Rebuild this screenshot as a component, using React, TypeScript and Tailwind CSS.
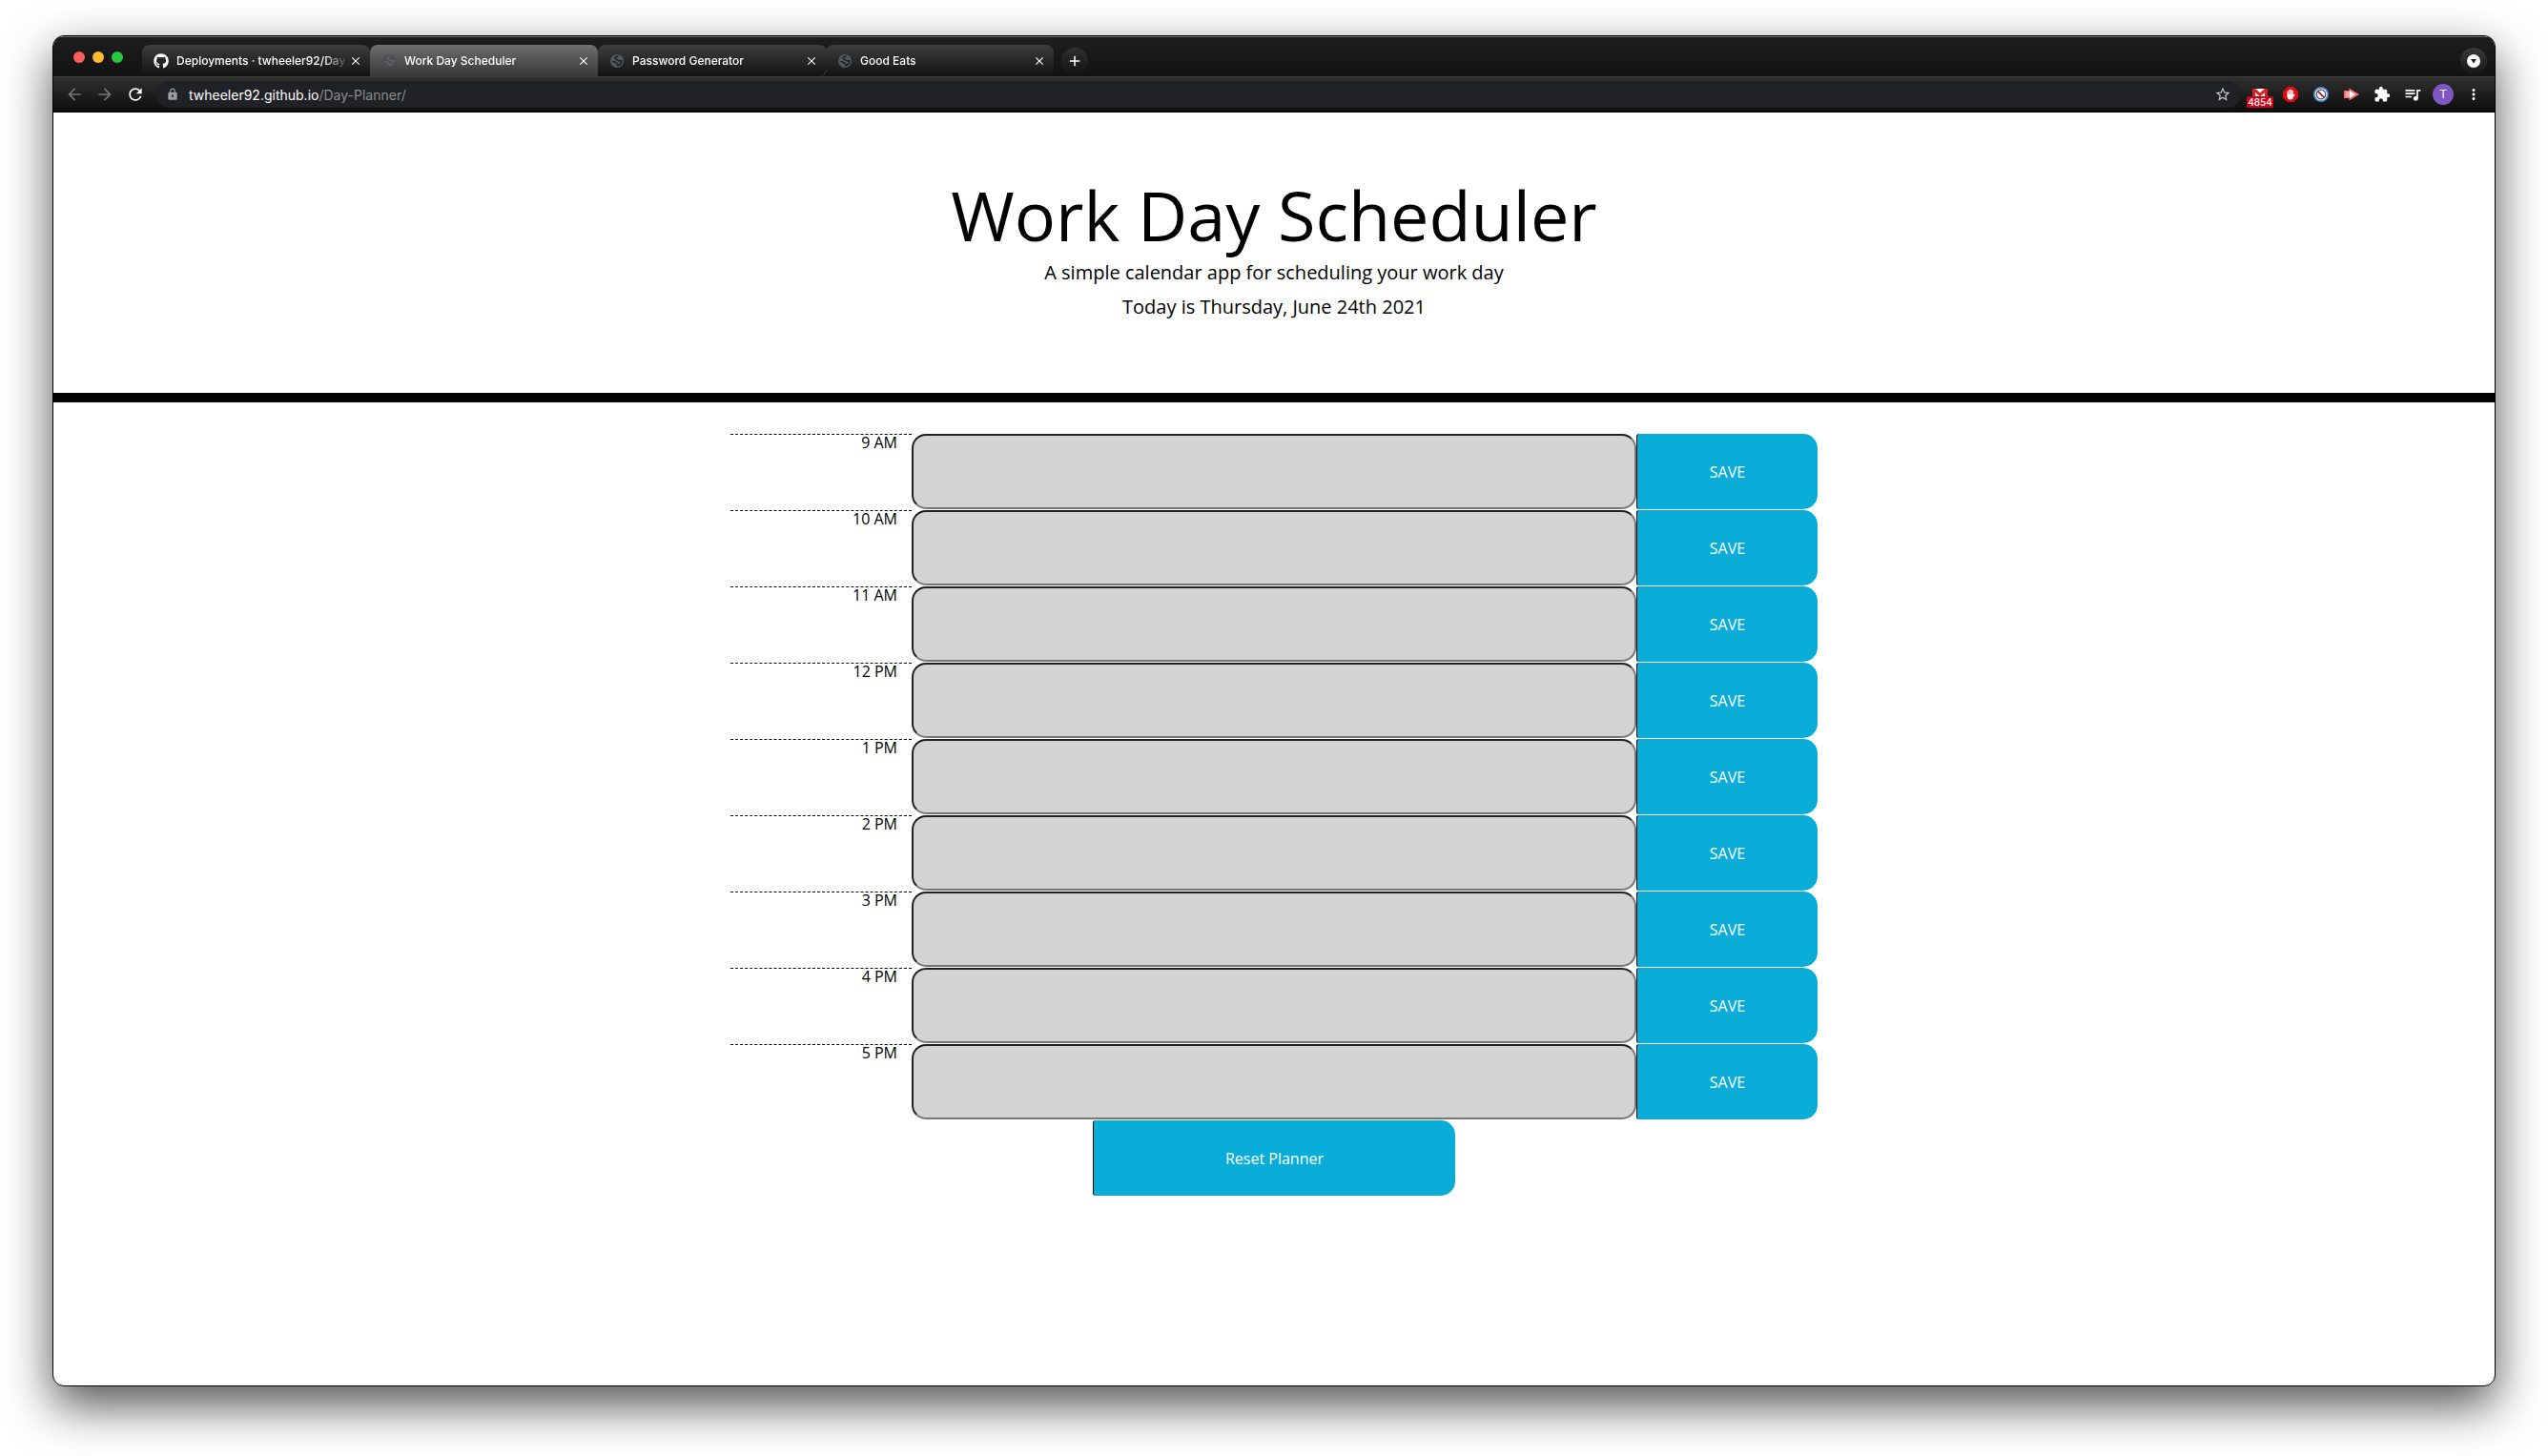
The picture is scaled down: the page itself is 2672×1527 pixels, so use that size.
import React from "react";
import { FaGithub } from "react-icons/fa";
import {
  MdArrowBack,
  MdArrowForward,
  MdClose,
  MdAdd,
  MdExtension,
  MdLock,
  MdMoreVert,
  MdQueueMusic,
  MdRefresh,
  MdStarBorder,
} from "react-icons/md";

const hours = ["9 AM", "10 AM", "11 AM", "12 PM", "1 PM", "2 PM", "3 PM", "4 PM", "5 PM"];

type TabProps = { title: string; icon: React.ReactNode; active?: boolean; divider?: boolean };

function Tab({ title, icon, active, divider }: TabProps) {
  return (
    <div
      className={
        active
          ? "flex h-[33px] w-[239px] items-center rounded-t-lg bg-linear-to-b from-[#6e6e6e] to-[#383838] pr-2 pl-3"
          : "flex h-[33px] w-[239px] items-center rounded-lg bg-linear-to-b from-[#3e3e3e] to-[#131313] pr-2 pl-3 " +
            (divider ? "shadow-[1px_0_0_#4a4a4a]" : "")
      }
    >
      <span className="flex size-4 shrink-0 items-center justify-center">{icon}</span>
      <button
        type="button"
        className="ml-2 min-w-0 flex-1 overflow-hidden mask-r-from-85% text-left text-xs font-medium whitespace-nowrap text-white"
      >
        {title}
      </button>
      <button type="button" aria-label={"Close " + title} className="shrink-0 text-white">
        <MdClose className="size-[14px]" />
      </button>
    </div>
  );
}

function MailIcon() {
  return (
    <svg viewBox="0 0 28 22" className="h-[22px] w-7">
      <path d="M6 2h16v11H6z" fill="#f1f1f1" />
      <path d="M6 2h3l5 4.500L19 2h3v11h-3V6l-5 4.300L9 6v7H6z" fill="#d8201c" />
      <rect x="0" y="10" width="28" height="12" rx="1.500" fill="#d0021b" />
      <text x="14" y="20" textAnchor="middle" fontSize="10" fontWeight="500" fill="#fff">
        4854
      </text>
    </svg>
  );
}

function HandIcon() {
  return (
    <svg viewBox="0 0 16 16" className="size-4">
      <path d="M4.700 0h6.600L16 4.700v6.600L11.300 16H4.700L0 11.300V4.700z" fill="#e20a0a" />
      <g stroke="#fff" strokeWidth="1.300" strokeLinecap="round">
        <path d="M5.200 5v4M6.900 3.500V9M8.600 3.200V9M10.200 4.500V9M12 8.200L10.300 10.500" />
      </g>
      <path d="M4.550 8h6.300v2.500c0 2-1.100 3-3 3s-3.300-1-3.300-3z" fill="#fff" />
    </svg>
  );
}

function BlockIcon() {
  return (
    <svg viewBox="0 0 16 16" className="size-4">
      <circle cx="8" cy="8" r="8" fill="#3f8fd6" />
      <circle cx="8" cy="8" r="6.300" fill="#fff" />
      <circle cx="8" cy="8" r="4.800" fill="none" stroke="#5a4250" strokeWidth="1.200" />
      <path d="M4.600 4.600l6.800 6.800" stroke="#a02530" strokeWidth="1.800" />
    </svg>
  );
}

function ArrowBadgeIcon() {
  return (
    <svg viewBox="0 0 16 16" className="size-4">
      <path d="M0 4h5.500V1.500L16 8 5.500 14.500V12H0z" fill="#f0716e" />
      <path d="M2 5.500h4v5H2z" fill="#f7a9a7" />
      <path d="M6 4l6 4-6 4z" fill="#fff" />
    </svg>
  );
}

function Globe({ dim }: { dim?: boolean }) {
  return (
    <svg viewBox="0 0 16 16" className="size-4">
      <circle cx="8" cy="8" r="7" fill={dim ? "#4b4d51" : "#54575c"} />
      <path
        d="M9.500 3C7.500 3 6 4 6.200 5.200c.2 1.300 2 1 2.800 1.900.7.800 1.900.9 3.800.7-.1 2.400-1.500 4.300-4 4.900.2-1.200-.1-2-1.100-2.300-.9-1.300-2.400-1.900-4.500-1.900"
        fill="none"
        stroke={dim ? "#5f6063" : "#1f2022"}
        strokeWidth="1.600"
        strokeLinejoin="round"
      />
    </svg>
  );
}

export default function App() {
  return (
    <div className="flex min-h-screen flex-col bg-white px-[55px] pt-[37px] pb-[73px] font-['Open_Sans',sans-serif] text-black">
      <div className="flex flex-1 flex-col overflow-hidden rounded-[12px] border border-black bg-white shadow-[0_20px_50px_rgba(0,0,0,0.68)]">
        <div className="font-[Inter,sans-serif]">
          <div className="flex h-[42px] items-end border-t border-[#6a6a6a] bg-linear-to-b from-[#1e1e1e] to-[#121212] pr-2">
            <div className="flex h-[41px] w-[93px] shrink-0 items-center gap-2 pl-[21px]">
              <button type="button" aria-label="Close window" className="size-3 rounded-full bg-[#ff5f57]" />
              <button type="button" aria-label="Minimize window" className="size-3 rounded-full bg-[#febc2e]" />
              <button type="button" aria-label="Zoom window" className="size-3 rounded-full bg-[#28c840]" />
            </div>
            <Tab title="Deployments · twheeler92/Day" icon={<FaGithub className="size-4 text-white" />} />
            <Tab title="Work Day Scheduler" icon={<Globe dim />} active />
            <Tab title="Password Generator" icon={<Globe />} divider />
            <Tab title="Good Eats" icon={<Globe />} />
            <button
              type="button"
              aria-label="New tab"
              className="mb-[2px] ml-2 flex size-7 items-center justify-center rounded-full bg-linear-to-b from-[#303030] to-[#141414] text-white"
            >
              <MdAdd className="size-[18px]" />
            </button>
            <button
              type="button"
              aria-label="Search tabs"
              className="mb-[2px] ml-auto flex size-7 items-center justify-center rounded-full bg-linear-to-b from-[#3a3a3a] to-[#171717]"
            >
              <svg viewBox="0 0 14 14" className="size-[14px]">
                <circle cx="7" cy="7" r="7" fill="#fff" />
                <path d="M4 5h6L7 9.500z" fill="#222" />
              </svg>
            </button>
          </div>
          <div className="flex h-[38px] items-center border-t border-b border-t-[#3c3c3c] border-b-black bg-linear-to-b from-[#303030] to-[#0e0e0e] pr-[6px] pl-3">
            <div className="flex w-24 shrink-0 items-center gap-3">
              <button type="button" aria-label="Back" className="text-[#757575]">
                <MdArrowBack className="size-5" />
              </button>
              <button type="button" aria-label="Forward" className="text-[#757575]">
                <MdArrowForward className="size-5" />
              </button>
              <button type="button" aria-label="Reload" className="text-white">
                <MdRefresh className="size-5" />
              </button>
            </div>
            <div className="flex h-7 flex-1 items-center rounded-full bg-[#202124] pr-[10px] pl-[10px]">
              <MdLock className="size-[14px] text-[#9aa0a6]" />
              <a href="#address" className="ml-[10px] text-[14px] text-[#8b8d90]">
                <span className="text-white">twheeler92.github.io</span>/Day-Planner/
              </a>
              <button type="button" aria-label="Bookmark" className="ml-auto text-[#c4c7ca]">
                <MdStarBorder className="size-[18px]" />
              </button>
            </div>
            <div className="flex shrink-0 items-center pl-1">
              <button type="button" aria-label="Mail, 4854 unread" className="flex w-8 justify-center pt-[6px]">
                <MailIcon />
              </button>
              <button type="button" aria-label="Ad blocker" className="flex w-8 justify-center">
                <HandIcon />
              </button>
              <button type="button" aria-label="Popup blocker" className="flex w-8 justify-center">
                <BlockIcon />
              </button>
              <button type="button" aria-label="Video extension" className="flex w-8 justify-center">
                <ArrowBadgeIcon />
              </button>
              <button type="button" aria-label="Extensions" className="flex w-8 justify-center text-white">
                <MdExtension className="size-[18px]" />
              </button>
              <button type="button" aria-label="Media" className="flex w-8 justify-center text-white">
                <MdQueueMusic className="size-5" />
              </button>
              <button type="button" aria-label="Profile" className="flex w-8 justify-center">
                <span className="flex size-[22px] items-center justify-center rounded-full bg-[#7e57c2] text-xs text-white">
                  T
                </span>
              </button>
              <button type="button" aria-label="Menu" className="flex w-8 justify-center text-white">
                <MdMoreVert className="size-[18px]" />
              </button>
            </div>
          </div>
        </div>

        <header className="flex h-[304px] flex-col items-center border-b-[10px] border-black pt-[62px] text-center text-xl">
          <h1 className="text-[72px] leading-[90px]">Work Day Scheduler</h1>
          <p className="mb-1 leading-8">A simple calendar app for scheduling your work day</p>
          <p className="leading-8">Today is Thursday, June 24th 2021</p>
        </header>

        <main className="mx-auto flex w-full max-w-[1140px] flex-col pt-[33px] text-base">
          {hours.map((hour) => {
            const id = "slot-" + hour.replace(" ", "-");
            return (
              <div key={hour} className="mb-px flex h-[79px]">
                <label htmlFor={id} className="w-1/6 border-t border-dashed border-black pr-[15px] text-right leading-4">
                  {hour}
                </label>
                <textarea
                  id={id}
                  className="w-2/3 resize-none rounded-[15px] border-2 border-t-[#1f2020] border-r-[#767676] border-b-[#767676] border-l-[#1f2020] bg-[#d3d3d3] px-3"
                />
                <button
                  type="button"
                  className="w-1/6 rounded-l-[3px] rounded-r-[15px] border-l border-black bg-[#09add8] text-white"
                >
                  SAVE
                </button>
              </div>
            );
          })}
          <button
            type="button"
            className="h-[79px] w-1/3 self-center rounded-l-[3px] rounded-r-[15px] border-l border-black bg-[#09add8] text-white"
          >
            Reset Planner
          </button>
        </main>
      </div>
    </div>
  );
}
